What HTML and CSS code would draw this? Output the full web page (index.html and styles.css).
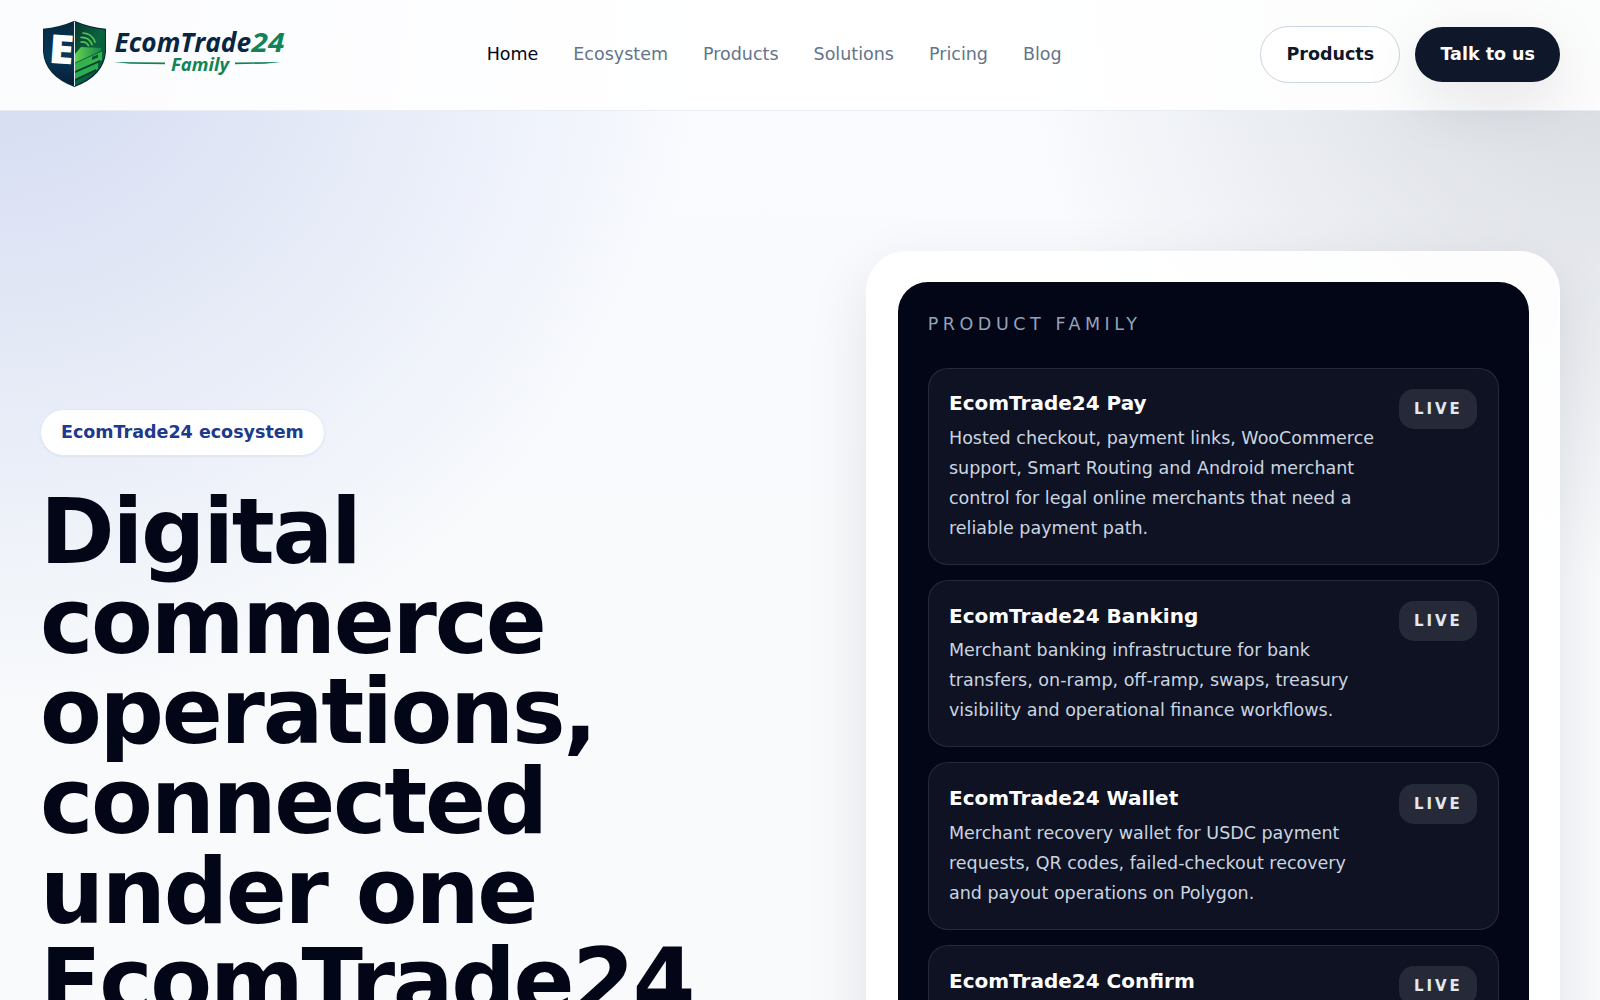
FILE: index.html
```html
<!DOCTYPE html>
<html lang="en">
<head>
    <meta charset="utf-8">
    <title>EcomTrade24 Family</title>
    <link rel="stylesheet" href="styles.css">
</head>
<body>

<header class="site-header">
    <div class="container header-inner">
        <a href="#" class="logo">
            <svg width="248" height="70" viewBox="0 0 248 70" role="img" aria-label="EcomTrade24 Family">
                <defs>
                    <linearGradient id="navy" x1="0" y1="0" x2="0" y2="1">
                        <stop offset="0" stop-color="#082a40"/>
                        <stop offset=".55" stop-color="#083858"/>
                        <stop offset="1" stop-color="#061c36"/>
                    </linearGradient>
                    <linearGradient id="green" x1="0" y1="0" x2="1" y2="1">
                        <stop offset="0" stop-color="#07372f"/>
                        <stop offset=".5" stop-color="#0b6340"/>
                        <stop offset="1" stop-color="#0a5535"/>
                    </linearGradient>
                    <linearGradient id="card" x1="0" y1="0" x2="1" y2="0">
                        <stop offset="0" stop-color="#62d453"/>
                        <stop offset="1" stop-color="#17864a"/>
                    </linearGradient>
                    <clipPath id="rightHalf">
                        <path d="M35 2 Q48 8 65 9 V31 Q64 53 35 65.500Z"/>
                    </clipPath>
                </defs>
                <path d="M34.500 .8 Q19 7.500 3 8.800 V32 Q5 56 34.500 67 Q64 56 66 32 V8.800 Q50 7.500 34.500 .8Z" fill="#05283b"/>
                <path d="M34 2 Q20 8.300 4 9.800 V32 Q6 54 34 65.500Z" fill="url(#navy)"/>
                <path d="M35 2 Q48 8 65 9.800 V32 Q63 54 35 65.500Z" fill="url(#green)"/>
                <g clip-path="url(#rightHalf)">
                    <path d="M35 34 L41 27 L61 28 L61 31 L35 44Z" fill="url(#card)"/>
                    <path d="M35 43 L62 31 V40 L35 52Z" fill="#36b24d"/>
                    <path d="M35 51 L60 40 V42 L35 53Z" fill="#064132"/>
                    <path d="M35 53 L58 43 V49 L35 60Z" fill="#2aac50"/>
                    <path d="M35 59 L56 49 V51 L35 61Z" fill="#063c30"/>
                    <path d="M52 37 L58 34.500 V37.500 L52 40Z" fill="#07513a"/>
                    <path d="M35 43 L62 31" stroke="#075038" stroke-width=".8"/>
                </g>
                <g fill="none" stroke="#56c453" stroke-width="1.700" stroke-linecap="round">
                    <path d="M41 22 Q46 21.500 48.500 25.500"/>
                    <path d="M41 17.500 Q49 17 52 24.500"/>
                    <path d="M43 13 Q52 13.500 55 22"/>
                </g>
                <path d="M34.500 1.500 V66" stroke="#dcebed" stroke-width="1"/>
                <text class="logo-e" x="9" y="43.500" textLength="25" lengthAdjust="spacingAndGlyphs" transform="rotate(4 20 30)">E</text>
                <text class="logo-name" x="74.500" y="32" textLength="136.500" lengthAdjust="spacingAndGlyphs">EcomTrade</text>
                <text class="logo-num" x="211.500" y="32" textLength="33" lengthAdjust="spacingAndGlyphs">24</text>
                <text class="logo-family" x="131" y="51" textLength="58" lengthAdjust="spacingAndGlyphs">Family</text>
                <path d="M74 42 L125 42.500 V44.200 L90 43.700Z" fill="#12805a"/>
                <path d="M241 42 L195 42.500 V44.200 L225 43.700Z" fill="#12805a"/>
            </svg>
        </a>
        <nav class="main-nav">
            <a href="#" class="active">Home</a>
            <a href="#">Ecosystem</a>
            <a href="#">Products</a>
            <a href="#">Solutions</a>
            <a href="#">Pricing</a>
            <a href="#">Blog</a>
        </nav>
        <div class="header-actions">
            <a href="#" class="btn btn-light">Products</a>
            <a href="#" class="btn btn-dark">Talk to us</a>
        </div>
    </div>
</header>

<main class="hero">
    <div class="container hero-grid">
        <div class="hero-copy">
            <span class="pill">EcomTrade24 ecosystem</span>
            <h1>Digital commerce operations, connected under one EcomTrade24</h1>
        </div>
        <div class="family-card">
            <div class="family-panel">
                <p class="eyebrow">Product family</p>
                <div class="product-list">
                    <div class="product">
                        <div>
                            <h2>EcomTrade24 Pay</h2>
                            <p>Hosted checkout, payment links, WooCommerce support, Smart Routing and Android merchant control for legal online merchants that need a reliable payment path.</p>
                        </div>
                        <span class="badge">Live</span>
                    </div>
                    <div class="product">
                        <div>
                            <h2>EcomTrade24 Banking</h2>
                            <p>Merchant banking infrastructure for bank transfers, on-ramp, off-ramp, swaps, treasury visibility and operational finance workflows.</p>
                        </div>
                        <span class="badge">Live</span>
                    </div>
                    <div class="product">
                        <div>
                            <h2>EcomTrade24 Wallet</h2>
                            <p>Merchant recovery wallet for USDC payment requests, QR codes, failed-checkout recovery and payout operations on Polygon.</p>
                        </div>
                        <span class="badge">Live</span>
                    </div>
                    <div class="product">
                        <div>
                            <h2>EcomTrade24 Confirm</h2>
                        </div>
                        <span class="badge">Live</span>
                    </div>
                </div>
            </div>
        </div>
    </div>
</main>

</body>
</html>
```

FILE: styles.css
```css
html {
    font-size: 20px;
}
* {
    box-sizing: border-box;
}
body {
    margin: 0;
    height: 100vh;
    overflow: hidden;
    font-family: "DejaVu Sans", sans-serif;
    line-height: 1.5;
    color: #0f172a;
    background:
        radial-gradient(circle at 0 0, rgba(30, 64, 175, 0.18), transparent 710px),
        radial-gradient(circle at 100% 0, rgba(15, 23, 42, 0.15), transparent 580px),
        linear-gradient(180deg, #f8fbff 0, #f8fafc 700px);
}
a {
    color: inherit;
    text-decoration: none;
}
h1, h2, p {
    margin: 0;
}
.container {
    max-width: 80rem;
    margin: 0 auto;
    padding: 0 2rem;
}

/* header */
.site-header {
    position: relative;
    z-index: 10;
    background: rgba(255, 255, 255, 0.9);
    border-bottom: 1px solid rgba(226, 232, 240, 0.8);
}
.header-inner {
    display: flex;
    align-items: center;
    justify-content: space-between;
    padding-top: 0.975rem;
    padding-bottom: 1.025rem;
}
.logo, .logo svg {
    display: block;
}
.logo text {
    font-family: "Open Sans", sans-serif;
    font-weight: 700;
}
.logo .logo-e {
    font-size: 40px;
    font-weight: 800;
    fill: #fff;
}
.logo .logo-name {
    font-size: 26.5px;
    font-style: italic;
    fill: #082642;
}
.logo .logo-num {
    font-size: 26.5px;
    font-style: italic;
    fill: #118457;
}
.logo .logo-family {
    font-size: 18.5px;
    font-style: italic;
    fill: #118457;
}
.main-nav {
    display: flex;
    gap: 1.75rem;
    font-size: 0.875rem;
    line-height: 1.25rem;
    color: #64748b;
}
.main-nav .active {
    color: #020617;
}
.header-actions {
    display: flex;
    align-items: center;
    gap: 0.75rem;
}
.btn {
    padding: 0.75rem 1.25rem;
    border-radius: 999px;
    font-size: 0.875rem;
    line-height: 1.25rem;
    font-weight: 600;
}
.btn-light {
    padding: 0.7625rem 1.2625rem;
    background: #fff;
    border: 1px solid #cbd5e1;
}
.btn-dark {
    background: #0f172a;
    color: #fff;
    box-shadow: 0 20px 60px rgba(15, 23, 42, 0.1);
}

/* hero */
.hero-grid {
    display: grid;
    grid-template-columns: 1.05fr 0.95fr;
    gap: 3rem;
    padding-top: 7rem;
}
.hero-copy {
    padding-top: 158px;
}
.pill {
    display: inline-block;
    padding: 0.5rem 1rem;
    border: 1px solid #dbeafe;
    border-radius: 999px;
    background: #fff;
    color: #1e3a8a;
    font-size: 0.875rem;
    line-height: 1.25rem;
    font-weight: 600;
    box-shadow: 0 1px 2px rgba(0, 0, 0, 0.05);
}
h1 {
    margin-top: 1.55rem;
    font-size: 4.5rem;
    line-height: 1;
    letter-spacing: -0.025em;
    color: #020617;
}
.family-card {
    padding: 1.5125rem;
    border: 1px solid #fff;
    border-radius: 2rem;
    background: rgba(255, 255, 255, 0.9);
    box-shadow: 0 20px 60px rgba(15, 23, 42, 0.1);
}
.family-panel {
    padding: 1.5rem;
    border-radius: 1.5rem;
    background: #020617;
}
.eyebrow {
    font-size: 0.875rem;
    line-height: 1.25rem;
    letter-spacing: 0.26em;
    text-transform: uppercase;
    color: #94a3b8;
}
.product-list {
    display: grid;
    gap: 0.75rem;
    margin-top: 1.5125rem;
}
.product {
    display: flex;
    align-items: flex-start;
    justify-content: space-between;
    gap: 1rem;
    padding: 1.0125rem;
    border: 1px solid rgba(255, 255, 255, 0.1);
    border-radius: 1rem;
    background: rgba(255, 255, 255, 0.05);
}
.product:last-child {
    min-height: 167px;
}
.product h2 {
    margin-top: -0.3px;
    font-size: 1rem;
    font-weight: 600;
    color: #fff;
}
.product p {
    margin-top: 0.22rem;
    margin-bottom: 0.9px;
    font-size: 0.875rem;
    line-height: 1.5rem;
    color: #cbd5e1;
}
.badge {
    padding: 0.5rem 0.75rem;
    border-radius: 0.75rem;
    background: rgba(255, 255, 255, 0.1);
    color: #e2e8f0;
    font-size: 0.75rem;
    line-height: 1rem;
    font-weight: 600;
    letter-spacing: 0.19em;
    text-transform: uppercase;
}
```
